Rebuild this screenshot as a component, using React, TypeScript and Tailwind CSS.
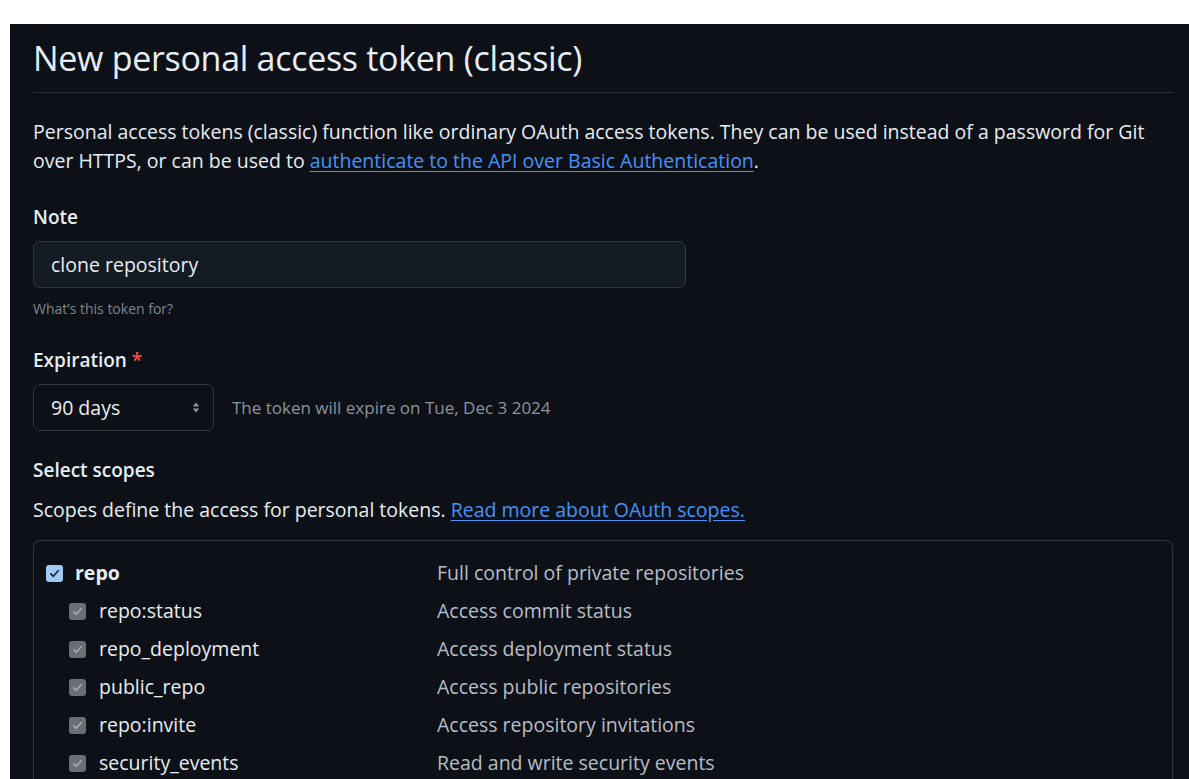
const scopes = [
  { name: 'repo', desc: 'Full control of private repositories', parent: true },
  { name: 'repo:status', desc: 'Access commit status' },
  { name: 'repo_deployment', desc: 'Access deployment status' },
  { name: 'public_repo', desc: 'Access public repositories' },
  { name: 'repo:invite', desc: 'Access repository invitations' },
  { name: 'security_events', desc: 'Read and write security events' },
];

function Check({ parent }: { parent?: boolean }) {
  return (
    <span
      className={
        'flex h-[17px] w-[17px] shrink-0 items-center justify-center rounded-[3px] ' +
        (parent ? 'bg-[#9fcaf6]' : 'bg-[#6b6e73]')
      }
    >
      <svg viewBox="0 0 16 16" className="h-[13px] w-[13px]" fill="none">
        <path
          d="M3.5 8.5l3 3 6-7"
          stroke={parent ? '#1b2430' : '#a9abae'}
          strokeWidth="2"
          strokeLinecap="round"
          strokeLinejoin="round"
        />
      </svg>
    </span>
  );
}

export default function App() {
  return (
    <div className="min-h-screen bg-white pl-[10px] pt-[24px] font-['Open_Sans',sans-serif]">
      <div className="min-h-[755px] bg-[#0d1117] pl-[23px] pr-[16px] pt-[10px] text-[#e6edf3]">
        <h1 className="border-b border-[#2b3036] pb-[10px] text-[34px] leading-[48px] font-normal tracking-[-0.3px]">
          New personal access token (classic)
        </h1>

        <p className="mt-[24px] text-[19.5px] leading-[29px]">
          Personal access tokens (classic) function like ordinary OAuth access tokens. They can be used instead of a
          password for Git
          <br />
          over HTTPS, or can be used to{' '}
          <a className="text-[#4493f8] underline underline-offset-[3px]">authenticate to the API over Basic Authentication</a>.
        </p>

        <div className="mt-[30px] text-[19px] leading-[24px] font-semibold">Note</div>
        <div className="mt-[12px] flex h-[47px] w-[653px] items-center rounded-[7px] border border-[#30363d] bg-[#151b23] px-[17px] text-[19.5px]">
          clone repository
        </div>
        <div className="mt-[11px] text-[14px] leading-[20px] text-[#7d8590]">What’s this token for?</div>

        <div className="mt-[29px] text-[19px] leading-[24px] font-semibold">
          Expiration <span className="text-[#f85149]">*</span>
        </div>
        <div className="mt-[12px] flex items-center">
          <div className="flex h-[47px] w-[181px] items-center justify-between rounded-[7px] border border-[#30363d] bg-[#0d1117] pl-[17px] pr-[13px] text-[19.5px]">
            <span>90 days</span>
            <svg viewBox="0 0 8 12" className="h-[11px] w-[8px]" fill="#8b949e">
              <path d="M4 0.5L7.5 4.8H0.5Z" />
              <path d="M4 11.5L0.5 7.2H7.5Z" />
            </svg>
          </div>
          <span className="ml-[18px] text-[17px] text-[#8b949e]">The token will expire on Tue, Dec 3 2024</span>
        </div>

        <div className="mt-[27px] text-[19px] leading-[24px] font-semibold">Select scopes</div>
        <p className="mt-[15px] text-[19.5px] leading-[26px]">
          Scopes define the access for personal tokens.{' '}
          <a className="text-[#4493f8] underline underline-offset-[3px]">Read more about OAuth scopes.</a>
        </p>

        <div className="mt-[17px] min-h-[260px] rounded-t-[7px] border border-b-0 border-[#30363d] pl-[12px] pt-[13px]">
          {scopes.map((s) => (
            <div key={s.name} className="flex h-[38px] items-center">
              <div className={'flex w-[391px] items-center ' + (s.parent ? 'gap-[12px]' : 'gap-[13px] pl-[23px]')}>
                <Check parent={s.parent} />
                <span className={'text-[19.5px] ' + (s.parent ? 'font-bold' : '')}>{s.name}</span>
              </div>
              <span className="text-[19.5px] text-[#b7bdc6]">{s.desc}</span>
            </div>
          ))}
        </div>
      </div>
    </div>
  );
}
